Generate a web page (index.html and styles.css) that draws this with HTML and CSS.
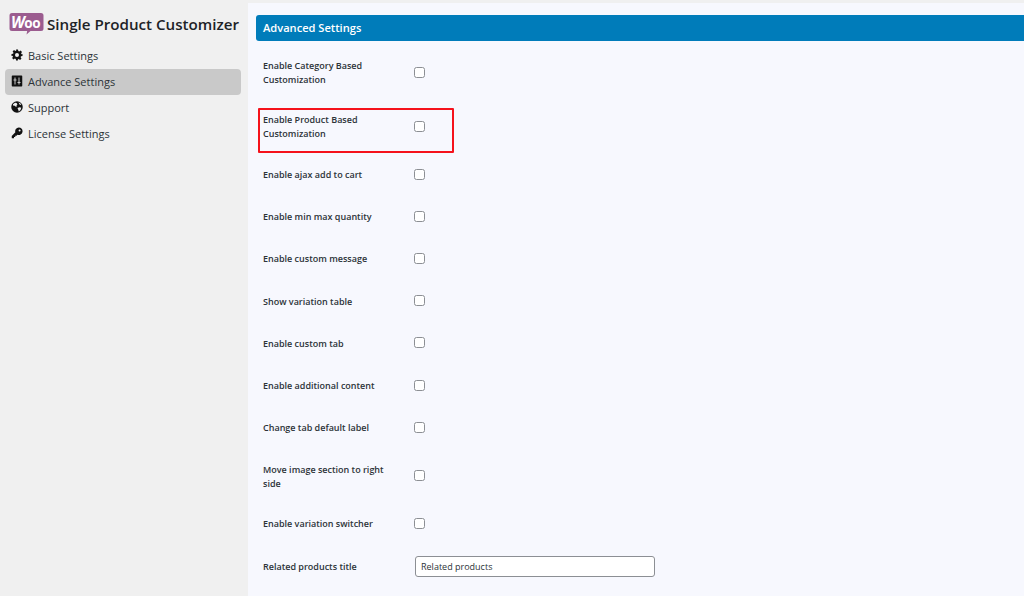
FILE: index.html
```html
<!DOCTYPE html>
<html lang="en">
<head>
<meta charset="utf-8">
<title>Single Product Customizer</title>
<link rel="stylesheet" href="styles.css">
</head>
<body>
<div class="app">
  <aside class="sidebar">
    <div class="brand">
      <svg class="logo" width="35" height="24" viewBox="0 0 35 24">
        <path fill="#9b5c8f" d="M3 1h29a2.500 2.500 0 0 1 2.500 2.500v13a2.500 2.500 0 0 1-2.500 2.500h-9l-1.500 0-4 3.500 .7-3.500H3A2.500 2.500 0 0 1 .5 16.500v-13A2.500 2.500 0 0 1 3 1z"/>
        <text class="logo-text" x="2" y="16"><tspan class="logo-w">W</tspan>oo</text>
      </svg>
      <span class="brand-name">Single Product Customizer</span>
    </div>
    <nav class="nav">
      <a class="nav-item">
        <svg class="nav-icon" viewBox="0 0 24 24"><path fill="#111" fill-rule="evenodd" d="M10 1h4l.6 3.200 1.900.8 2.700-1.800 2.800 2.800-1.800 2.700.8 1.900L23 10v4l-3 .6-.8 1.900 1.800 2.700-2.800 2.800-2.700-1.800-1.900.8L13.800 23h-3.600l-.6-3.200-1.900-.8-2.700 1.800-2.800-2.800 1.800-2.700-.8-1.900L1 14v-4l3.200-.6.800-1.900-1.800-2.700 2.800-2.800 2.700 1.800 1.900-.8zM12 8a4 4 0 1 0 0 8 4 4 0 0 0 0-8z"/></svg>
        <span class="nav-text">Basic Settings</span>
      </a>
      <a class="nav-item is-active">
        <svg class="nav-icon" viewBox="0 0 24 24"><path fill="#111" fill-rule="evenodd" d="M3 1h18a1.500 1.500 0 0 1 1.500 1.500v19A1.500 1.500 0 0 1 21 23H3a1.500 1.500 0 0 1-1.500-1.500v-19A1.500 1.500 0 0 1 3 1zM7 5v4H5v2h2v8h2v-8h2V9H9V5zm8 0v9h-2v2h2v3h2v-3h2v-2h-2V5z"/></svg>
        <span class="nav-text">Advance Settings</span>
      </a>
      <a class="nav-item">
        <svg class="nav-icon" viewBox="0 0 24 24"><circle cx="12" cy="12" r="11.500" fill="#111"/><path fill="#f0f0f0" d="M4 6.500l4-3 3 .5 2 2.500-2 2 1 2-2.500 1-2-2-3.500-.5zM13 14l4-1.500 3.500 1-1.500 4.500-3.500 3-1-3.500zM15 3l3.500 1.500 2 3.500-3-.5z"/></svg>
        <span class="nav-text">Support</span>
      </a>
      <a class="nav-item">
        <svg class="nav-icon" viewBox="0 0 24 24"><path fill="#111" fill-rule="evenodd" d="M15.500 1a7.500 7.500 0 1 1-2.600 14.500L11 17.500H8.500V20H6v2.500H1.500V18l7.200-7.300A7.500 7.500 0 0 1 15.500 1zm1.700 3.800a2 2 0 1 0 0 4 2 2 0 0 0 0-4z"/></svg>
        <span class="nav-text">License Settings</span>
      </a>
    </nav>
  </aside>
  <main class="main">
    <h1 class="panel-title">Advanced Settings</h1>
    <div class="rows">
      <div class="row"><label class="row-label">Enable Category Based Customization</label><span class="check"></span></div>
      <div class="row row-marked"><label class="row-label">Enable Product Based Customization</label><span class="check"></span><span class="marker"></span></div>
      <div class="row"><label class="row-label">Enable ajax add to cart</label><span class="check"></span></div>
      <div class="row"><label class="row-label">Enable min max quantity</label><span class="check"></span></div>
      <div class="row"><label class="row-label">Enable custom message</label><span class="check"></span></div>
      <div class="row"><label class="row-label">Show variation table</label><span class="check"></span></div>
      <div class="row"><label class="row-label">Enable custom tab</label><span class="check"></span></div>
      <div class="row"><label class="row-label">Enable additional content</label><span class="check"></span></div>
      <div class="row"><label class="row-label">Change tab default label</label><span class="check"></span></div>
      <div class="row row-low"><label class="row-label">Move image section to right side</label><span class="check"></span></div>
      <div class="row"><label class="row-label">Enable variation switcher</label><span class="check"></span></div>
      <div class="row row-input"><label class="row-label">Related products title</label><input class="text-input" type="text" value="Related products"></div>
    </div>
  </main>
</div>
</body>
</html>
```
FILE: styles.css
```css
* { box-sizing: border-box; }
html, body { margin: 0; height: 100%; overflow: hidden; }
body {
  background: #f0f0f0;
  font-family: "Open Sans", "Noto Sans", sans-serif;
  color: #2c3338;
}
.app { display: flex; height: 596px; }
.sidebar { width: 248px; flex: none; padding: 11px 7px 0 5px; }
.brand { display: flex; align-items: center; gap: 3px; height: 26px; padding-left: 4px; margin-bottom: 6px; }
.logo { flex: none; display: block; }
.logo-text { font: 700 13.500px "Open Sans", sans-serif; fill: #fff; letter-spacing: -0.5px; }
.logo-w { font-style: italic; font-size: 15.500px; }
.brand-name { font-size: 15.150px; font-weight: 600; color: #1d2327; white-space: nowrap; }
.nav { display: flex; flex-direction: column; }
.nav-item { display: flex; align-items: center; height: 26px; padding-left: 6px; gap: 5px; font-size: 11px; color: #2c3338; border-radius: 4px; }
.nav-item.is-active { background: #c9c9c9; }
.nav-icon { width: 12px; height: 12px; flex: none; margin-top: -3px; }
.nav-text { margin-top: -2px; }
.main { flex: 1; margin-top: 3px; background: #f7f8fe; padding: 12px 0 0 8px; }
.panel-title {
  margin: 0;
  height: 26px;
  line-height: 26px;
  padding-left: 7px;
  font-size: 11.100px;
  font-weight: 600;
  color: #fff;
  background: #007cba;
  border-radius: 3px 0 0 3px;
}
.rows { padding: 5px 0 0 7px; }
.row { position: relative; display: flex; align-items: center; min-height: 42.200px; padding: 13px 0; }
.row-input { padding: 10px 0; }
.row-low { padding: 14px 0 12px; }
.row-label { width: 151px; flex: none; font-size: 9px; line-height: 14px; font-weight: 600; color: #2c3338; padding-right: 20px; }
.check { width: 11px; height: 11px; margin-top: -2px; border: 1px solid #8c8f94; border-radius: 2.500px; background: #fff; }
.row-low .check { margin-top: -4px; }
.marker { position: absolute; left: -5px; top: 8px; width: 196px; height: 45px; border: 2px solid #f5121c; border-radius: 1px; }
.text-input {
  width: 240px;
  height: 21px;
  margin-left: 1px;
  padding: 0 5px;
  border: 1px solid #8c8f94;
  border-radius: 3px;
  background: #fff;
  font: 9px "Open Sans", sans-serif;
  color: #2c3338;
}
```
